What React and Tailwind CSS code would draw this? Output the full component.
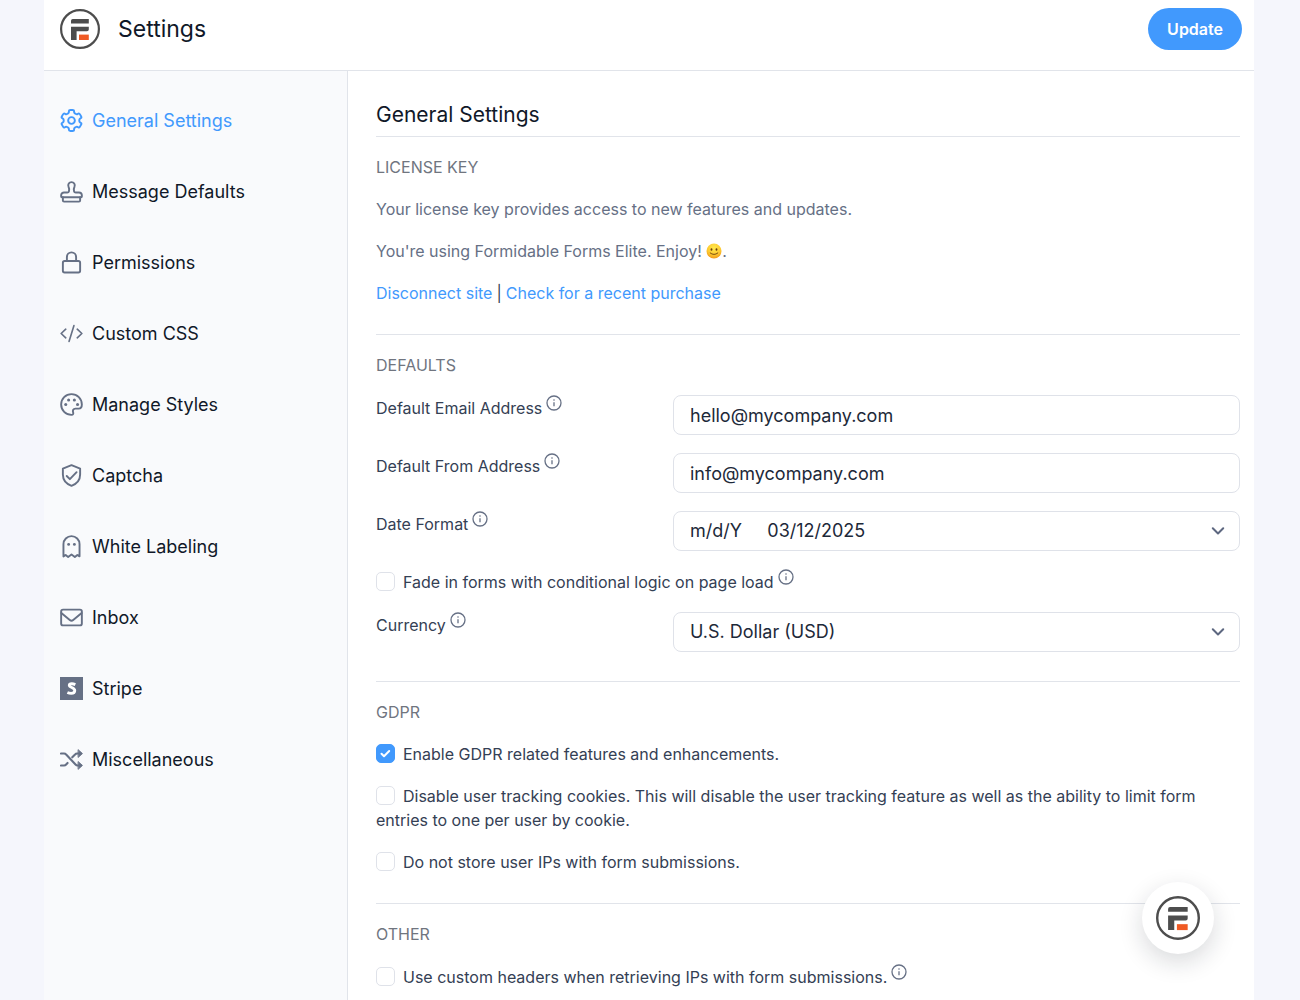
const stroke = {
  fill: 'none',
  stroke: 'currentColor',
  strokeWidth: 2,
  strokeLinecap: 'round',
  strokeLinejoin: 'round',
}

function Icon({ children }) {
  return (
    <svg viewBox="0 0 24 24" className="size-[23px] shrink-0" aria-hidden="true" {...stroke}>
      {children}
    </svg>
  )
}

// Outline of a six-toothed gear with rounded corners, centred on 12,12.
function gearPath() {
  const points = []
  for (let tooth = 0; tooth < 6; tooth++) {
    for (const [offset, radius] of [[-19, 8.3], [-14, 11.2], [14, 11.2], [19, 8.3]]) {
      const angle = ((tooth * 60 + offset) * Math.PI) / 180
      points.push([12 + radius * Math.sin(angle), 12 - radius * Math.cos(angle)])
    }
  }
  const mix = (a, b, t) => [a[0] + (b[0] - a[0]) * t, a[1] + (b[1] - a[1]) * t].map((n) => n.toFixed(2)).join(' ')
  const count = points.length
  return (
    points
      .map((p, i) => {
        const before = points[(i + count - 1) % count]
        const after = points[(i + 1) % count]
        return (i ? 'L' : 'M') + mix(p, before, 0.3) + 'Q' + mix(p, p, 0) + ' ' + mix(p, after, 0.3)
      })
      .join('') + 'Z'
  )
}

const navItems = [
  {
    label: 'General Settings',
    active: true,
    icon: (
      <Icon>
        <path d={gearPath()} />
        <circle cx="12" cy="12" r="3.5" />
      </Icon>
    ),
  },
  {
    label: 'Message Defaults',
    icon: (
      <Icon>
        <path d="M9.300 12c.6-1.700.3-3.600-.4-5a3.400 3.400 0 1 1 6.200 0c-.7 1.400-1 3.300-.4 5 .2.700.9 1 1.700 1h3.400a3 3 0 0 1 3 3v1.200a.8.8 0 0 1-.8.800H2a.8.8 0 0 1-.8-.8V16a3 3 0 0 1 3-3h3.400c.8 0 1.500-.3 1.700-1z" />
        <path d="M3 18v3.400c0 .7.500 1.200 1.200 1.200h15.600c.7 0 1.200-.5 1.200-1.200V18" />
      </Icon>
    ),
  },
  {
    label: 'Permissions',
    icon: (
      <Icon>
        <rect x="3" y="10.500" width="18" height="12" rx="1.800" />
        <path d="M7.200 10.500V6.200a4.800 4.800 0 0 1 9.600 0v4.300" />
      </Icon>
    ),
  },
  {
    label: 'Custom CSS',
    icon: (
      <Icon>
        <path d="M6 7.500 1.200 12 6 16.500M18 7.500l4.800 4.500-4.800 4.500M14.500 3.800l-5 16.400" strokeWidth="1.700" />
      </Icon>
    ),
  },
  {
    label: 'Manage Styles',
    icon: (
      <Icon>
        <path d="M12 1.200C5.900 1.200 1.200 6 1.200 12S6 22.800 12 22.800c1.700 0 2.200-1.200 1.700-2.500-.8-2.200.2-4 2.400-4h3.400c2 0 3.300-1.700 3.300-4.300 0-6-4.800-10.800-10.800-10.800z" />
        <g fill="currentColor" stroke="none">
          <circle cx="6" cy="12" r="1.600" />
          <circle cx="9" cy="7.300" r="1.600" />
          <circle cx="15" cy="7.300" r="1.600" />
          <circle cx="18.300" cy="12" r="1.600" />
        </g>
      </Icon>
    ),
  },
  {
    label: 'Captcha',
    icon: (
      <Icon>
        <path d="M12 1.200 3 4.800V11c0 6 3.600 9.800 9 11.800 5.400-2 9-5.800 9-11.800V4.800z" />
        <path d="m7 12.500 3.300 3.300 7-7.300" />
      </Icon>
    ),
  },
  {
    label: 'White Labeling',
    icon: (
      <Icon>
        <path d="M3.600 9.600a8.400 8.400 0 0 1 16.800 0v12.700l-2.300-1.500-2.600 2.100-3.500-2.600-3.500 2.600-2.600-2.100-2.300 1.500z" />
        <g fill="currentColor" stroke="none">
          <circle cx="9" cy="9.800" r="1.500" />
          <circle cx="15" cy="9.800" r="1.500" />
        </g>
      </Icon>
    ),
  },
  {
    label: 'Inbox',
    icon: (
      <Icon>
        <rect x="1.200" y="3.800" width="21.600" height="16.400" rx="2" />
        <path d="m1.400 7.400 8.800 7.300q1.800 1.500 3.600 0l8.800-7.300" />
      </Icon>
    ),
  },
  {
    label: 'Stripe',
    icon: (
      <svg viewBox="0 0 24 24" className="size-[23px] shrink-0" aria-hidden="true">
        <path fill="currentColor" d="M0 0h24v24H0z" />
        <path
          fill="none"
          stroke="#fff"
          strokeWidth="3"
          d="M16 7.900C14.700 7.300 13.500 7 12.300 7c-1.700 0-2.600.6-2.600 1.600 0 2.800 5.700 1.900 5.700 5.600 0 2-1.500 2.900-3.700 2.900-1.400 0-2.700-.3-4-.9"
        />
      </svg>
    ),
  },
  {
    label: 'Miscellaneous',
    icon: (
      <Icon>
        <path
          d="M1 5.800h3.200q1.300 0 2.200 1l9.800 10.400q.9 1 2.200 1h1.600M1 18.200h3.200q1.300 0 2.200-1l1.500-1.600M12.800 9.700l2.900-2.900q.9-1 2.200-1h2.100"
          strokeWidth="2.200"
        />
        <path d="M19.200 2 23.400 5.800l-4.200 3.800zM19.200 14.400l4.200 3.800-4.200 3.800z" fill="currentColor" strokeWidth="1" />
      </Icon>
    ),
  },
]

function Logo({ className }) {
  return (
    <svg viewBox="0 0 40 40" className={className} aria-hidden="true">
      <circle cx="20" cy="20" r="18.900" fill="#fff" stroke="#4d4d4d" strokeWidth="2.200" />
      <path fill="#4d4d4d" d="M12.800 10h16v4.400h-17.800v-2.600q0-1.800 1.800-1.800zM11 17.800h17.800v2.600q0 1.800-1.800 1.800H16.600v8.800H11z" />
      <path fill="#f05a24" d="M19 25.600h9.800V31H19z" />
    </svg>
  )
}

function Info({ label }) {
  return (
    <button type="button" aria-label={'About ' + label} className="ml-1 inline-block align-[3px] text-[#667085]">
      <svg viewBox="0 0 16 16" className="size-4" fill="none" stroke="currentColor" aria-hidden="true">
        <circle cx="8" cy="8" r="7" strokeWidth="1.300" />
        <path d="M8 7.200v4" strokeWidth="1.300" />
        <circle cx="8" cy="5" r=".8" fill="currentColor" stroke="none" />
      </svg>
    </button>
  )
}

function Smile() {
  return (
    <svg viewBox="0 0 16 16" className="inline-block size-4 align-[-2px]" role="img" aria-label="slightly smiling face">
      <defs>
        <radialGradient id="face" cx=".5" cy=".3" r=".75">
          <stop offset="0" stopColor="#ffe94d" />
          <stop offset=".6" stopColor="#fdc92f" />
          <stop offset="1" stopColor="#ef8f17" />
        </radialGradient>
      </defs>
      <circle cx="8" cy="8" r="7.500" fill="url(#face)" />
      <ellipse cx="5.500" cy="6.500" rx=".9" ry="1.300" fill="#6b3d0c" />
      <ellipse cx="10.500" cy="6.500" rx=".9" ry="1.300" fill="#6b3d0c" />
      <path d="M4.200 10q3.800 3 7.600 0" fill="none" stroke="#6b3d0c" strokeWidth=".9" strokeLinecap="round" />
    </svg>
  )
}

function Section({ title, children }) {
  return (
    <section className="flex flex-col gap-[18px] border-b border-[#e1e4ea] pt-[18px] pb-[29px] last:border-b-0">
      <h3 className="uppercase text-[#70757f]">{title}</h3>
      {children}
    </section>
  )
}

function Check({ children, info, ...props }) {
  return (
    <div>
      <label>
        <span className="mr-2 inline-grid size-[19px] align-[-3px]">
          <input
            type="checkbox"
            className="peer col-start-1 row-start-1 size-[19px] appearance-none rounded-[5px] border border-[#dfe2e9] bg-white checked:border-[#4199fd] checked:bg-[#4199fd]"
            {...props}
          />
          <svg
            viewBox="0 0 19 19"
            className="pointer-events-none invisible col-start-1 row-start-1 peer-checked:visible"
            fill="none"
            stroke="#fff"
            strokeWidth="2"
            strokeLinecap="round"
            strokeLinejoin="round"
            aria-hidden="true"
          >
            <path d="m5.500 9.700 2.500 2.500 5.200-5.200" />
          </svg>
        </span>
        {children}
      </label>
      {info && <Info label={info} />}
    </div>
  )
}

function Row({ id, label, children }) {
  return (
    <div className="grid grid-cols-[297px_1fr] items-start">
      <div>
        <label htmlFor={id}>{label}</label>
        <Info label={label} />
      </div>
      {children}
    </div>
  )
}

const control =
  'h-10 w-full appearance-none rounded-lg border border-[#dfe2e9] bg-white px-4 text-[18px] text-[#1d2939] whitespace-pre'

function Select({ id, option }) {
  return (
    <div className="grid items-center">
      <select id={id} className={control + ' col-start-1 row-start-1'}>
        <option>{option}</option>
      </select>
      <svg
        viewBox="0 0 14 8"
        className="pointer-events-none col-start-1 row-start-1 mr-[15px] h-2 w-3.5 justify-self-end text-[#5d6780]"
        fill="none"
        stroke="currentColor"
        strokeWidth="2"
        strokeLinecap="round"
        strokeLinejoin="round"
        aria-hidden="true"
      >
        <path d="m1.800 1.300 5.200 5.200 5.200-5.200" />
      </svg>
    </div>
  )
}

export default function App() {
  return (
    <div className="flex min-h-screen bg-[#f5f6fc] pr-[46px] pl-11 font-['Inter',sans-serif] text-[16px] leading-6 text-[#344054]">
      <div className="flex flex-1 flex-col bg-white">
        <header className="flex items-center justify-between border-b border-[#e1e4ea] pt-2 pr-3 pb-5 pl-4">
          <div className="flex items-center gap-[18px]">
            <Logo className="size-10" />
            <h1 className="text-[23px] leading-7 text-[#101828]">Settings</h1>
          </div>
          <button type="button" className="h-[42px] rounded-full bg-[#4199fd] px-[19px] font-semibold text-white">
            Update
          </button>
        </header>
        <div className="flex flex-1">
          <nav className="w-[304px] shrink-0 border-r border-[#e1e4ea] bg-[#f9fafc] pt-3.5">
            <ul>
              {navItems.map((item) => (
                <li key={item.label}>
                  <a
                    href="#"
                    className={
                      item.active
                        ? 'flex h-[71px] items-center gap-[9px] pl-4 text-[18px] text-[#4199fd]'
                        : 'flex h-[71px] items-center gap-[9px] pl-4 text-[18px] text-[#101828]'
                    }
                  >
                    <span className={item.active ? 'text-[#4199fd]' : 'text-[#667085]'}>{item.icon}</span>
                    {item.label}
                  </a>
                </li>
              ))}
            </ul>
          </nav>
          <main className="flex-1 pt-[30px] pr-3.5 pl-7">
            <h2 className="border-b border-[#e1e4ea] pb-[7px] text-[21px] leading-7 text-[#101828]">General Settings</h2>
            <Section title="License Key">
              <p className="text-[#667085]">Your license key provides access to new features and updates.</p>
              <p className="text-[#667085]">
                You're using Formidable Forms Elite. Enjoy! <Smile />.
              </p>
              <div className="flex items-center gap-1">
                <a href="#" className="text-[#4199fd]">
                  Disconnect site
                </a>
                <span>|</span>
                <a href="#" className="text-[#4199fd]">
                  Check for a recent purchase
                </a>
              </div>
            </Section>
            <Section title="Defaults">
              <Row id="email" label="Default Email Address">
                <input id="email" type="email" defaultValue="hello@mycompany.com" className={control} />
              </Row>
              <Row id="from" label="Default From Address">
                <input id="from" type="email" defaultValue="info@mycompany.com" className={control} />
              </Row>
              <Row id="date" label="Date Format">
                <Select id="date" option={'m/d/Y \u00a0 \u00a0 03/12/2025'} />
              </Row>
              <Check info="fading in forms">Fade in forms with conditional logic on page load</Check>
              <Row id="currency" label="Currency">
                <Select id="currency" option="U.S. Dollar (USD)" />
              </Row>
            </Section>
            <Section title="GDPR">
              <Check defaultChecked>Enable GDPR related features and enhancements.</Check>
              <Check>
                Disable user tracking cookies. This will disable the user tracking feature as well as the ability to
                limit form entries to one per user by cookie.
              </Check>
              <Check>Do not store user IPs with form submissions.</Check>
            </Section>
            <Section title="Other">
              <Check info="custom headers">Use custom headers when retrieving IPs with form submissions.</Check>
            </Section>
          </main>
        </div>
      </div>
      <button
        type="button"
        aria-label="Open Formidable menu"
        className="fixed right-[86px] bottom-[46px] grid size-[72px] place-items-center rounded-full bg-white shadow-[0_8px_24px_rgba(16,24,40,0.16)]"
      >
        <Logo className="size-11" />
      </button>
    </div>
  )
}
